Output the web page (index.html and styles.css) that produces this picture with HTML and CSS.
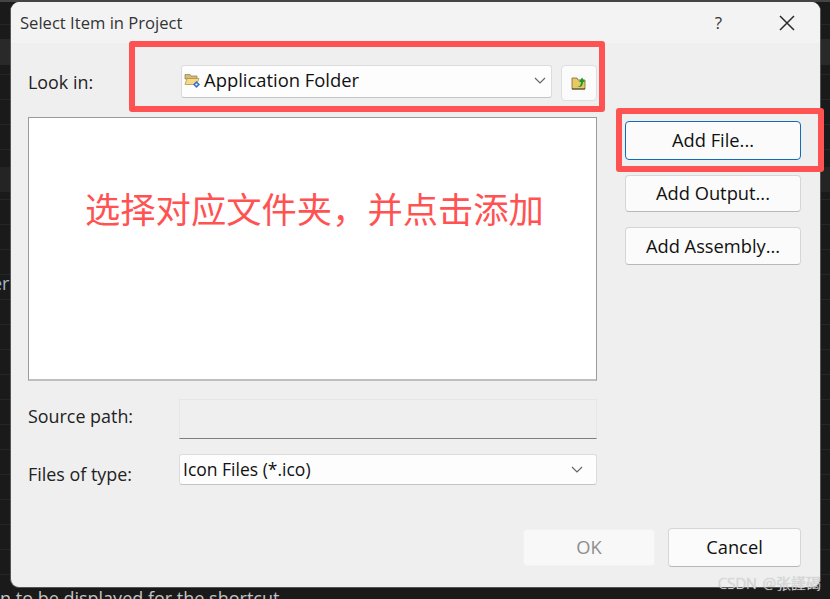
FILE: index.html
```html
<!DOCTYPE html>
<html lang="en">
<head>
    <meta charset="UTF-8">
    <title>Select Item in Project</title>
    <link rel="stylesheet" href="styles.css">
</head>
<body>
    <div class="bg-side">er</div>
    <div class="dialog">
        <div class="titlebar">
            <h1>Select Item in Project</h1>
            <span class="help">?</span>
            <svg class="close" width="16" height="16" viewBox="0 0 16 16"><path d="M1 1L15 15M15 1L1 15" stroke="#2b2b2b" stroke-width="1.5" fill="none"/></svg>
        </div>
        <div class="content">
            <div class="main">
                <div class="look-row">
                    <label class="look-label">Look in:</label>
                    <div class="combo look-combo">
                        <svg class="folder" width="17" height="16" viewBox="0 0 17 16">
                            <path d="M1 2.5h5l1 1.5h6v3H1z" fill="#d6bb72" stroke="#8d7a4c" stroke-width=".7"/>
                            <path d="M1 12.5L3 6.5h12l-2.5 6z" fill="#f6d986" stroke="#a88c4a" stroke-width=".7"/>
                            <path d="M12.5 9l3.5 3.5-3.5 3.500-3.500-3.500z" fill="#3a6fc4"/>
                            <circle cx="12.500" cy="12.500" r="1.100" fill="#fff"/>
                        </svg>
                        <span class="combo-text">Application Folder</span>
                        <svg class="chevron" width="12" height="7" viewBox="0 0 12 7"><path d="M1 1l5 5 5-5" stroke="#666" stroke-width="1.2" fill="none"/></svg>
                    </div>
                    <div class="up-button">
                        <svg width="16" height="14" viewBox="0 0 16 14">
                            <path d="M1 2h5l1 2h7v9H1z" fill="#e9c964" stroke="#7b6a3a" stroke-width=".8"/>
                            <path d="M1 13h13" stroke="#4d4428" stroke-width="1.200"/>
                            <path d="M6 10.500c3 .5 4-1.500 4-4.500H8l3-4.500L14 6h-2c0 4-2.500 6-6 4.500z" fill="#1f9a2e"/>
                        </svg>
                    </div>
                </div>
                <div class="file-list">选择对应文件夹，并点击添加</div>
                <div class="source-row">
                    <label>Source path:</label>
                    <div class="source-input"></div>
                </div>
                <div class="type-row">
                    <label>Files of type:</label>
                    <div class="combo type-combo">
                        <span class="combo-text">Icon Files (*.ico)</span>
                        <svg class="chevron" width="12" height="7" viewBox="0 0 12 7"><path d="M1 1l5 5 5-5" stroke="#666" stroke-width="1.2" fill="none"/></svg>
                    </div>
                </div>
            </div>
            <div class="side">
                <button class="btn btn-focus">Add File...</button>
                <button class="btn btn-output">Add Output...</button>
                <button class="btn btn-assembly">Add Assembly...</button>
            </div>
        </div>
        <div class="footer">
            <button class="btn btn-ok" disabled>OK</button>
            <button class="btn btn-cancel">Cancel</button>
        </div>
    </div>
    <div class="bg-bottom">n to be displayed for the shortcut</div>
    <div class="mark mark-look"></div>
    <div class="mark mark-add"></div>
    <div class="watermark">CSDN @张謹碣</div>
</body>
</html>
```

FILE: styles.css
```css
* {
    margin: 0;
    padding: 0;
    box-sizing: border-box;
    font-family: "Open Sans", "Noto Sans", "Noto Sans CJK SC", sans-serif;
}
body {
    background-color: #1a1a1a;
    background-image:
        linear-gradient(#444 0 2px, transparent 2px),
        linear-gradient(transparent 39px, #292929 39px 65px, transparent 65px),
        linear-gradient(transparent 167px, #242424 167px 192px, transparent 192px),
        repeating-linear-gradient(transparent 0 24px, #262626 24px 25px);
    width: 830px;
    height: 599px;
    overflow: hidden;
    position: relative;
    padding: 2px 0 0 10px;
}
.bg-side {
    position: absolute;
    left: -8px;
    top: 271px;
    font-size: 18px;
    color: #9cb8d8;
}
.bg-bottom {
    position: absolute;
    left: 0;
    top: 586px;
    font-size: 18px;
    color: #c4c4c4;
}
.dialog {
    width: 811px;
    height: 586px;
    background: #efefef;
    border-radius: 9px;
    border: 1px solid #555;
    border-top: 0;
    overflow: hidden;
    color: #1a1a1a;
}
.titlebar {
    height: 41px;
    background: #f3f3f3;
    display: flex;
    align-items: center;
    padding: 0 25px 0 9px;
}
.titlebar h1 {
    font-size: 16.6px;
    font-weight: normal;
    color: #333;
    flex: 1;
}
.help {
    font-size: 17px;
    color: #333;
    margin-right: 57px;
}
.content {
    display: flex;
    height: 444px;
}
.main {
    width: 586px;
    padding: 22px 0 0 17px;
}
.side {
    display: flex;
    flex-direction: column;
    padding: 78px 0 0 28px;
}
label {
    font-size: 17.9px;
    color: #222;
}
.look-row {
    display: flex;
    align-items: flex-start;
}
.look-label {
    width: 153px;
    padding-top: 5px;
}
.combo {
    background: #fdfdfd;
    border: 1px solid #dcdcdc;
    border-bottom-color: #c4c4c4;
    border-radius: 3px;
    display: flex;
    align-items: center;
    font-size: 18.4px;
}
.combo-text {
    flex: 1;
    color: #111;
    line-height: 24px;
}
.look-combo {
    width: 371px;
    height: 33px;
    padding: 0 5px 3px 2px;
}
.folder {
    margin-right: 3px;
}
.up-button {
    width: 36px;
    height: 36px;
    margin-left: 9px;
    background: #fbfbfb;
    border: 1px solid #dedede;
    border-radius: 4px;
    display: flex;
    align-items: center;
    justify-content: center;
}
.file-list {
    width: 569px;
    height: 264px;
    margin-top: 16px;
    background: #fff;
    border: 1px solid #9a9aa2;
    border-bottom: 2px solid #bdbdc2;
    padding: 65px 0 0 56px;
    font-size: 35.3px;
    line-height: 50px;
    color: #ff5353;
    font-family: "Noto Sans CJK SC", sans-serif;
    font-weight: 400;
    white-space: nowrap;
}
.source-row {
    display: flex;
    align-items: flex-start;
    margin-top: 18px;
}
.source-row label, .type-row label {
    width: 151px;
    padding-top: 5px;
}
.source-input {
    width: 418px;
    height: 40px;
    background: #efefef;
    border: 1px solid #e6e6e6;
    border-bottom: 1px solid #7e7e7e;
}
.type-row {
    display: flex;
    align-items: flex-start;
    margin-top: 15px;
}
.type-row label {
    padding-top: 8px;
}
.type-combo {
    width: 418px;
    height: 31px;
    font-size: 17.5px;
    padding: 0 13px 1px 3px;
}
.btn {
    font-size: 18.3px;
    color: #111;
    background: #fbfbfb;
    border: 1px solid #d6d6d6;
    border-bottom-color: #b8b8b8;
    border-radius: 4px;
    padding-bottom: 2px;
}
.side .btn {
    width: 176px;
}
.btn-focus {
    height: 39px;
    border: 1px solid #0f6cbd;
}
.btn-output {
    height: 37px;
    margin-top: 15px;
}
.btn-assembly {
    height: 38px;
    margin-top: 15px;
}
.footer {
    display: flex;
    justify-content: flex-end;
    align-items: center;
    gap: 13px;
    padding: 41px 19px 0 0;
}
.btn-ok {
    width: 132px;
    height: 37px;
    background: #f8f8f8;
    border-color: #f2f2f2;
    color: #8e8e8e;
}
.btn-cancel {
    width: 133px;
    height: 39px;
}
.mark {
    position: absolute;
    border: 6px solid #ff5353;
    border-radius: 3px;
}
.mark-look {
    left: 129px;
    top: 41px;
    width: 476px;
    height: 71px;
}
.mark-add {
    left: 616px;
    top: 108px;
    width: 208px;
    height: 64px;
}
.watermark {
    position: absolute;
    left: 718px;
    top: 572px;
    font-size: 15px;
    font-weight: 300;
    word-spacing: 2px;
    color: #dcdcdc;
    text-shadow: 0 0 1px #aaa;
    white-space: nowrap;
}
```
